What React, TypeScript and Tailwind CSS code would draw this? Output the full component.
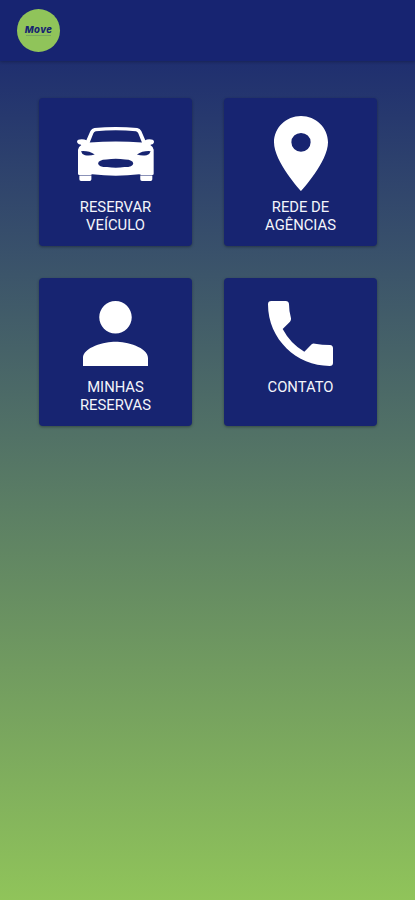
import type { ReactNode } from "react";

function CarIcon() {
  return (
    <svg className="mt-[29px] h-[54px] w-[77px]" viewBox="10 21 230 163" preserveAspectRatio="none" fill="#fff">
      <path
        fillRule="evenodd"
        d="M62 24 Q126 18 190 24 Q198 25 202 33 L214 61 Q218 58 226 58 Q239 58 240 65 Q240 73 232 74 L229 75 Q238 80 239 90 V162 Q239 166 235 166 H202 L196 164 Q126 173 56 164 L50 166 H17 Q13 166 13 162 V90 Q14 80 23 75 L20 74 Q11 73 10 65 Q11 58 24 58 Q33 58 38 61 L50 33 Q54 25 62 24 Z
        M66 34 Q126 28 186 34 Q191 35 193 40 L204 68 Q126 61 48 68 L59 40 Q61 35 66 34 Z
        M22 94 Q45 92 63 104 Q48 109 34 106 Q24 103 22 94 Z
        M230 94 Q207 92 189 104 Q204 109 218 106 Q228 103 230 94 Z
        M73 131 Q74 120 98 119 Q126 115 154 119 Q177 120 178 131 Q177 142 152 142 Q126 146 100 142 Q74 142 73 131 Z"
      />
      <path d="M17 167.5 H53 V179 Q53 184 48 184 H22 Q17 184 17 179 Z M199 167.5 H235 V179 Q235 184 230 184 H204 Q199 184 199 179 Z" />
    </svg>
  );
}

function PinIcon() {
  return (
    <svg className="mt-[18px] h-[75px] w-[54px]" viewBox="5 2 14 20" preserveAspectRatio="none" fill="#fff">
      <path d="M12 2C8.13 2 5 5.13 5 9c0 5.25 7 13 7 13s7-7.75 7-13c0-3.87-3.13-7-7-7zm0 9.5a2.5 2.5 0 0 1 0-5 2.5 2.5 0 0 1 0 5z" />
    </svg>
  );
}

function PersonIcon() {
  return (
    <svg className="mt-[23px] size-[65px]" viewBox="4 4 16 16" fill="#fff">
      <path d="M12 12c2.21 0 4-1.79 4-4s-1.79-4-4-4-4 1.79-4 4 1.79 4 4 4zm0 2c-2.67 0-8 1.34-8 4v2h16v-2c0-2.66-5.33-4-8-4z" />
    </svg>
  );
}

function PhoneIcon() {
  return (
    <svg className="mt-[23px] size-[65px]" viewBox="18 18 195 195" fill="#fff">
      <path d="M28 18 H71 Q80 18 81 27 Q81 50 87 70 Q88 76 84 80 L62 102 Q86 147 127 170 L149 148 Q153 144 159 146 Q180 150 204 150 Q213 151 213 160 V204 Q213 213 203 213 C104 213 18 133 18 28 Q18 18 28 18 Z" />
    </svg>
  );
}

function Card({ icon, lines }: { icon: ReactNode; lines: string[] }) {
  return (
    <button className="flex h-[148px] flex-col items-center rounded-[4px] bg-[#172471] shadow-[0_1px_3px_rgba(0,0,0,0.35)]">
      <span className="flex h-[100px] shrink-0 items-start justify-center">{icon}</span>
      <span className="flex flex-col text-center text-[14.8px] leading-[18px] text-[#f4f5fb]">
        {lines.map((line) => (
          <span key={line}>{line}</span>
        ))}
      </span>
    </button>
  );
}

export default function App() {
  return (
    <div className="h-[900px] w-full bg-linear-to-b/srgb from-[#172471] to-[#90c45a] font-['Roboto','Liberation_Sans',sans-serif]">
      <header className="flex h-[61px] items-center bg-[#172471] pl-[17px] shadow-[0_1px_3px_rgba(0,0,0,0.25)]">
        <div className="flex size-[43px] flex-col items-center justify-center rounded-full bg-[#90c45a]">
          <span className="font-['Inter',sans-serif] text-[9.5px] leading-[10px] font-extrabold tracking-[0.4px] text-[#172471] italic">
            Move
          </span>
          <span className="h-px w-[25px] bg-[#172471]/20" />
        </div>
      </header>
      <main className="grid grid-cols-[153px_153px] gap-8 pt-[37px] pl-[39px]">
        <Card icon={<CarIcon />} lines={["RESERVAR", "VEÍCULO"]} />
        <Card icon={<PinIcon />} lines={["REDE DE", "AGÊNCIAS"]} />
        <Card icon={<PersonIcon />} lines={["MINHAS", "RESERVAS"]} />
        <Card icon={<PhoneIcon />} lines={["CONTATO"]} />
      </main>
    </div>
  );
}
